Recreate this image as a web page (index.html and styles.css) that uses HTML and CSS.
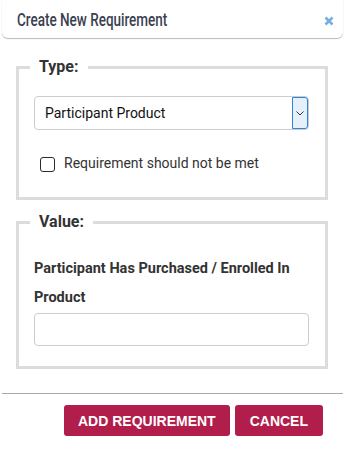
FILE: index.html
```html
<!DOCTYPE html>
<html>
<head>
<meta charset="utf-8">
<link rel="stylesheet" href="styles.css">
</head>
<body>
<div class="dialog">
  <header class="head">
    <h1 class="title">Create New Requirement</h1>
    <button class="close" aria-label="Close">
      <svg width="10" height="10" viewBox="0 0 10 10"><path d="M1.5 1.5 L8.5 8.5 M8.5 1.5 L1.5 8.5" stroke="#76ade0" stroke-width="2.6" stroke-linecap="butt"/></svg>
    </button>
  </header>
  <div class="body">
    <fieldset class="group group-type">
      <legend class="legend">Type:</legend>
      <div class="group-inner">
        <div class="select-wrap">
          <select class="select"><option>Participant Product</option></select>
          <span class="select-arrow"><svg width="8" height="5" viewBox="0 0 8 5"><path d="M0.5 0.5 L4 4 L7.5 0.5" fill="none" stroke="#333" stroke-width="1"/></svg></span>
        </div>
        <label class="check-row"><input type="checkbox" class="check"><span>Requirement should not be met</span></label>
      </div>
    </fieldset>
    <fieldset class="group group-value">
      <legend class="legend">Value:</legend>
      <div class="group-inner">
        <label class="field-label">Participant Has Purchased / Enrolled In Product</label>
        <input type="text" class="text-input">
      </div>
    </fieldset>
  </div>
  <footer class="foot">
    <button class="btn btn-add">ADD REQUIREMENT</button>
    <button class="btn btn-cancel">CANCEL</button>
  </footer>
</div>
</body>
</html>
```
FILE: styles.css
```css
* { box-sizing: border-box; }
html, body { margin: 0; padding: 0; background: #fff; }
body { font-family: Roboto, "Liberation Sans", Arial, sans-serif; color: #333; }
.dialog { width: 345px; height: 452px; }
.head {
  margin: 0 2px;
  height: 38px;
  display: flex;
  align-items: center;
  justify-content: space-between;
  padding: 0 9px 0 15px;
  border-radius: 0 0 6px 6px;
  box-shadow: 0 1px 1px rgba(0,0,0,0.28);
  background: #fff;
}
.title {
  margin: 0;
  font-family: Roboto, "Liberation Sans", sans-serif;
  font-weight: 500;
  font-size: 19px;
  line-height: 22px;
  color: #3b4150;
  transform: scaleX(0.71);
  transform-origin: left center;
  white-space: nowrap;
  padding-top: 2px;
}
.close {
  border: 0; background: none; padding: 0; margin: 0;
  width: 10px; height: 10px; display: flex; margin-top: 3px;
}
.body { padding: 19px 17px 0 16px; display: flex; flex-direction: column; gap: 12px; }
.group {
  margin: 0;
  padding: 0;
  border: 3px solid #dcdcdc;
  min-width: 0;
}
.legend {
  margin-left: 11px;
  padding: 0 9px;
  font-size: 16px;
  font-weight: bold;
  line-height: 20px;
  color: #333;
}
.group-type .group-inner { padding: 19px 16px 24px 15px; }
.group-value .group-inner { padding: 22px 16px 20px 15px; }
.select-wrap { position: relative; height: 34px; }
.select {
  appearance: none;
  -webkit-appearance: none;
  width: 100%;
  height: 34px;
  border: 1px solid #ccc;
  border-radius: 4px;
  background: #fff;
  padding: 0 10px;
  font-family: Roboto, "Liberation Sans", Arial, sans-serif;
  font-size: 14px;
  color: #111;
}
.select-arrow {
  position: absolute;
  right: 1px; top: 1px;
  width: 16px; height: 32px;
  background: #e6f0fb;
  border: 1.5px solid #2f84d8;
  border-radius: 0 3px 3px 0;
  display: flex; align-items: center; justify-content: center;
}
.check-row {
  display: flex; align-items: center; gap: 9px;
  margin-top: 23px; margin-left: 6px;
  font-size: 14px; color: #333; line-height: 20px;
}
.check {
  appearance: none; -webkit-appearance: none;
  width: 15px; height: 15px; margin: 0;
  border: 1.5px solid #2a2a2a; border-radius: 3px; background: #fff;
  flex: none; position: relative; top: 1px;
}
.field-label {
  display: block;
  font-size: 14.5px; font-weight: bold; line-height: 29px; color: #333;
}
.text-input {
  display: block;
  width: 100%; height: 33px;
  margin-top: 1px;
  border: 1px solid #ccc; border-radius: 4px;
}
.foot {
  margin: 24px 2px 0;
  border-top: 1px solid #aaa;
  padding: 11px 20px 0 0;
  display: flex; justify-content: flex-end; gap: 5px;
}
.btn {
  height: 31px;
  border: 0; border-radius: 3px;
  background: #b21e4b;
  color: #fff;
  font-family: "Liberation Sans", Arial, sans-serif;
  font-weight: bold; font-size: 14px;
}
.btn-add { padding: 0 14px; }
.btn-cancel { padding: 0 15px; }
```
